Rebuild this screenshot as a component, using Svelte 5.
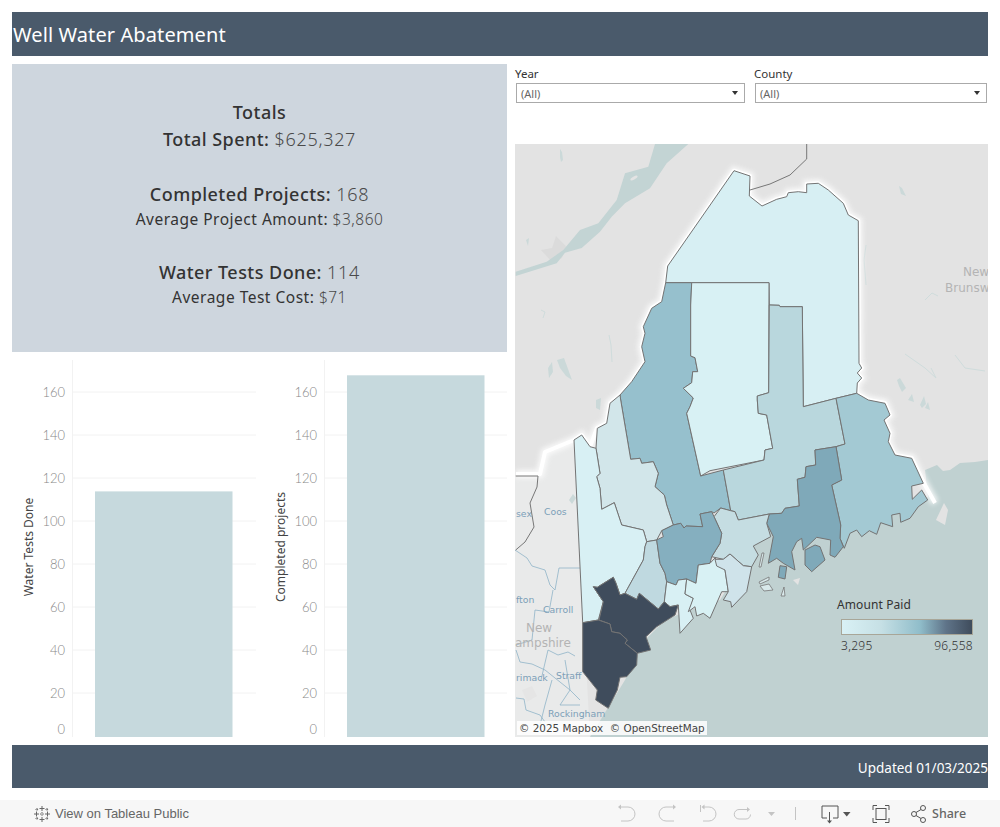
<script>
  const ticks = [160, 140, 120, 100, 80, 60, 40, 20]
  const y = (v) => 376.5 - v * 2.15

  const charts = [
    { label: 'Water Tests Done', value: 114, width: 244 },
    { label: 'Completed projects', value: 168, width: 243 },
  ]

  const filters = [
    { label: 'Year', width: 229 },
    { label: 'County', width: 232 },
  ]

  const counties = [
    { name: 'aroostook', fill: '#d7eff3', pts: '667.7,266 734,170.7 750,176 749.3,196 762,206 776.7,199.3 786.7,196.7 788.3,192.7 798.3,191.7 806.7,192.7 806.7,184 818.3,183.3 828.3,190 843.3,203.3 848.3,215 858.3,220.7 859,363.3 861.7,368 857.3,373 861.7,378 857.3,383 856.7,393.3 836,398.3 803.3,406.7 802.3,306.7 780,306.7 779.3,305.3 769.3,305 769,282.7 665.7,282.7' },
    { name: 'somerset', fill: '#96c0cd', pts: '665.7,282.7 691.7,282.7 690.7,305 690.7,356 695,357.7 697.7,371.7 692.7,371.7 691.7,382.7 683.3,388.3 693.3,398 690,406.7 686.7,413.3 700.7,476 723.3,470 730.7,510.7 720.7,508 714,513 711.7,511.7 700,514 702.7,526.7 686,526 684,528 680.7,523.3 673.3,525 666.7,505 664.3,495 655,486.7 658.3,473.3 653.3,461.7 641.7,463.3 640,458.3 630.7,459.3 620.7,400 620,395 631.7,381.7 645,361.7 641.7,346.7 645,333.3 643.3,326.7 651.7,308.3 661.7,301.7' },
    { name: 'piscataquis', fill: '#d8f1f4', pts: '691.7,282.7 769,282.7 768.7,392.7 757.3,396 757.3,400 758.3,413.3 766.7,415 772.7,448.3 765,450 764,460 710,470.7 700.7,476 686.7,413.3 690,406.7 693.3,398 683.3,388.3 691.7,382.7 692.7,371.7 697.7,371.7 695,357.7 690.7,356 690.7,305' },
    { name: 'penobscot', fill: '#b9d7dd', pts: '769.3,305 779.3,305.3 780,306.7 802.3,306.7 803.3,406.7 836,398.3 845,444 836,446.7 815,450 815.7,465 806,466.7 805,477.3 797.3,479.3 799.3,506 785,508.3 781.7,513.3 769.3,514 738.3,520 735,511.7 730.7,510.7 723.3,470 764,460 765,450 772.7,448.3 766.7,415 758.3,413.3 757.3,400 757.3,396 768.7,392.7' },
    { name: 'washington', fill: '#a3c9d3', pts: '836,398.3 856.7,393.3 868.3,400 885,403.3 890,415 884,420 890,433.3 888.3,441.7 895,455 911.7,458.3 923.3,483.3 911.7,486 912.3,499.3 921.7,490 927.7,500 918.3,506.7 910,518.3 900.7,522.3 900,513.3 891.7,515 892.7,526.7 880.7,522.7 876.7,534.3 869.3,530.7 861.7,536.7 856.7,530 850,533.3 844.3,548.3 840,538.3 840.7,525 831.7,485 841.7,480 836,446.7 845,444' },
    { name: 'hancock', fill: '#7fa9b9', pts: '815,450 836,446.7 841.7,480 831.7,485 840.7,525 840,538.3 843.3,546.7 835,557.3 830,555 830.7,540 816.7,537.3 803.3,550 801.7,538.3 796.7,541.7 791.7,551.7 795,570 783.3,563.3 776.7,558.3 768.3,563.3 773.3,536.7 766.7,523.3 769.3,514 781.7,513.3 785,508.3 799.3,506 797.3,479.3 805,477.3 806,466.7 815.7,465' },
    { name: 'mdi', fill: '#7fa9b9', pts: '805,550 815,545 820,546.7 825,560 811.7,571.7 805,565' },
    { name: 'isle', fill: '#7fa9b9', pts: '780,565.7 786.7,566.7 785,579 778.3,577.3' },
    { name: 'waldo', fill: '#c5dde2', pts: '720.7,508 730.7,510.7 735,511.7 738.3,520 769.3,514 766.7,523.3 770.7,536.7 753.3,546 758.3,555 751.7,566.7 743.3,565.7 730,554 723.3,559.3 711.7,556.7 720,543.3 721.7,533.3 714,516.7' },
    { name: 'franklin', fill: '#d2e6ea', pts: '620.7,400 630.7,459.3 640,458.3 641.7,463.3 653.3,461.7 658.3,473.3 655,486.7 664.3,495 666.7,505 673.3,525 661.7,530.7 656.7,540 646.7,541.7 643.3,530 621.7,525 614.3,502.7 601.7,509.3 600,488.3 596.7,476.7 600,473.3 596,448.3 597.3,428.3 606.7,423.3 610,403.3 620,395' },
    { name: 'oxford', fill: '#d8f0f4', pts: '574,440 581.7,435 590,446.7 596,448.3 600,473.3 596.7,476.7 600,488.3 601.7,509.3 614.3,502.7 621.7,525 643.3,530 646.7,541.7 645,546.7 643.3,560 625,593.3 620,595 616,583.3 613.3,577.3 597.3,587.3 593.3,586.7 603.3,601.7 598.3,620 582.7,622.7' },
    { name: 'androscoggin', fill: '#bfd9e0', pts: '646.7,541.7 656.7,540 660,563.3 665,573.3 666.7,581.7 664.3,601.7 658.3,609 639.3,593.3 636.7,599.3 625,593.3 643.3,560 645,546.7' },
    { name: 'kennebec', fill: '#85afbf', pts: '673.3,525 680.7,523.3 684,528 686,526 702.7,526.7 700,514 711.7,511.7 714,516.7 721.7,533.3 720,543.3 711.7,556.7 710,563.3 698.3,565 696,583.3 686.7,579 678.3,580 676,585 666.7,581.7 665,573.3 660,563.3 656.7,540 663.3,536.7 661.7,530.7' },
    { name: 'sagadahoc', fill: '#d8f0f4', pts: '666.7,581.7 676,585 678.3,580 686.7,579 685,594 693.3,598.3 690,610 693.3,618.3 680,633.3 678.3,605 670,606.7 664.3,601.7' },
    { name: 'lincoln', fill: '#d8f1f4', pts: '686.7,579 696,583.3 698.3,565 710,563.3 715,558 725,570 728.3,591.7 721.7,591.7 710,618.3 703.3,613.3 696.7,616 695,606.7 688.3,611.7 693.3,598.3 685,594' },
    { name: 'knox', fill: '#cfe3ea', pts: '715,559.3 723.3,559.3 730,554 743.3,565.7 751.7,566.7 746.7,591.7 731.7,607.3 730.7,601.7 723.3,600 728.3,591.7 725,570 716.7,566' },
    { name: 'cumberland', fill: '#3f4c5c', pts: '613.3,577.3 616,583.3 620,595 625,593.3 636.7,599.3 639.3,593.3 658.3,609 664.3,601.7 670,606.7 678.3,605 675,615 656.7,626.7 646,636.7 650.7,650 637.3,653.3 625,643.3 627.3,640 620,633.3 611.7,631.7 610,624 599,620 603.3,601.7 593.3,586.7 597.3,587.3' },
    { name: 'york', fill: '#3f4c5c', pts: '582.7,622.7 598.3,620 610,624 611.7,631.7 620,633.3 627.3,640 625,643.3 637.3,653.3 636.7,665 626.7,676.7 620,677.3 617.3,690 608.3,708.3 595.7,700 597.3,690 582.7,671.7' },
  ]

  const halo = '516,474 540,474 545,452 574,440 581.7,435 590,446.7 597,428 606.7,423 610,403 620,395 631.7,381.7 645,361.7 641.7,346.7 645,333 643,327 651.7,308 661.7,301.7 665.7,282.7 667.7,266 734,170.7 750,176 749.3,196 762,206 776.7,199.3 786.7,196.7 788.3,192.7 798.3,191.7 806.7,192.7 806.7,184 818.3,183.3 828.3,190 843.3,203.3 848.3,215 858.3,220.7 859,363 861.7,368 857.3,373 861.7,378 857.3,383 856.7,393.3 868.3,400 885,403 890,415 884,420 890,433 888,442 895,455 911.7,458 925,485 935,503'

  const seaPts = '988,460 975,462 960,463 950,470 943,471 937,465 925,470 928,497 905,510 850,528 800,535 768,520 745,560 720,600 690,610 665,620 645,640 625,680 590,737 988,737'

  const river = '515.7,271.7 546.7,261.7 563.3,250 580,230 598.3,223.3 616.7,200 625,173.3 648.3,166.7 655,144 688.3,144 666.7,163.3 650,188.3 625,203.3 611.7,216.7 600,231.7 581.7,248 565,252.7 556.7,263.3 515.7,276'

  const lakes = [
    '560,149 562,152 563,160 561,162 560,157',
    '526,240 529,238 528,246',
    '897,380 900,378 906,388 902,392 899,386',
    '920,405 924,396 926,404 922,408',
    '908,400 912,394 914,402',
    '548,368 552,362 553,372 549,378',
    '557,360 564,358 572,380 566,376 560,368',
    '925,408 928,402 930,410',
    '596,400 601,398 600,410 596,408',
    '899,186 902,188 906,196 901,194',
    '569,500 573,494 576,498 572,504',
  ]

  const streams = [
    '866,245 864,260 866,285',
    '905,354 925,368 936,378 931,368',
    '955,355 965,368 985,371',
    '609,335 611,345 612,362',
    '541,310 545,312 543,318',
    '925,300 932,293 938,296',
  ]

  const nhLines = [
    '515,550 527,558 532,566 545,570 550,585 555,590 559,568 580,568',
    '553,590 549,612 535,610 532,640 516,645',
    '516,650 520,662 532,664 545,670 570,690 580,700',
    '541,680 548,650 558,655 568,652 575,656',
    '565,660 570,690 560,705 580,705',
    '552,680 545,705 540,725',
    '516,698 524,699 526,710 540,715 545,722',
  ]

  const mapLabels = [
    { x: 516, y: 517, t: 'sex', cls: 'blue' },
    { x: 544, y: 515, t: 'Coos', cls: 'blue' },
    { x: 516, y: 603, t: 'fton', cls: 'blue' },
    { x: 543, y: 613, t: 'Carroll', cls: 'blue' },
    { x: 526, y: 632, t: 'New', cls: 'grey' },
    { x: 515, y: 647, t: 'ampshire', cls: 'grey' },
    { x: 516, y: 681, t: 'rimack', cls: 'blue' },
    { x: 556, y: 679, t: 'Straff', cls: 'blue' },
    { x: 548, y: 717, t: 'Rockingham', cls: 'blue' },
    { x: 963, y: 276, t: 'New', cls: 'grey' },
    { x: 945, y: 292, t: 'Brunsw', cls: 'grey' },
  ]
</script>

<div class="page">
  <header class="title">Well Water Abatement</header>

  <main class="middle">
    <section class="left">
      <div class="totals">
        <p class="big"><b>Totals</b></p>
        <p class="big"><b>Total Spent:</b> <span>$625,327</span></p>
        <p class="big gap"><b>Completed Projects:</b> <span>168</span></p>
        <p class="small">Average Project Amount: <span>$3,860</span></p>
        <p class="big gap"><b>Water Tests Done:</b> <span>114</span></p>
        <p class="small">Average Test Cost: <span>$71</span></p>
      </div>

      <div class="charts">
        {#each charts as c}
          <svg class="chart" width={c.width} height="377" viewBox="0 0 {c.width} 377">
            <line class="grid" x1="60.5" y1="0" x2="60.5" y2="377" />
            {#each ticks as t}
              <line class="grid" x1="60" y1={y(t) - 0.5} x2={c.width} y2={y(t) - 0.5} />
              <text class="tick" x="53" y={y(t) + 4.5}>{t}</text>
            {/each}
            <text class="tick" x="53" y="373.500">0</text>
            <rect class="bar" x="83" y={y(c.value)} width="137.5" height={377 - y(c.value)} />
            <text class="axis" transform="translate(21 187) rotate(-90)">{c.label}</text>
          </svg>
        {/each}
      </div>
    </section>

    <section class="right">
      <div class="filters">
        {#each filters as f}
          <div class="filter" style="width:{f.width}px">
            <div class="filter-label">{f.label}</div>
            <div class="select">
              <span>(All)</span>
              <i class="caret"></i>
            </div>
          </div>
        {/each}
      </div>

      <div class="map">
        <svg width="473" height="593" viewBox="515 144 473 593">
          <defs>
            <filter id="soft" x="-10%" y="-10%" width="120%" height="120%">
              <feGaussianBlur stdDeviation="2.5" />
            </filter>
          </defs>
          <rect x="515" y="144" width="473" height="593" fill="#e3e3e3" />
          <polygon points="515,476 540,476 545,452 574,440 590,737 515,737" fill="#e9eaea" />
          <polygon points="552,248 556,236 566,246 562,258 552,262 541,250" fill="#dbdbdb" />
          <polygon points="522,690 532,686 537,696 527,702" fill="#e5e5e5" />

          <polygon points={seaPts} fill="#c0d1d1" />
          <polygon points="936,520 944,503 948,510 945,525" fill="#e3e3e3" />
          <polygon points="793,580 800,578 798,585" fill="#e3e3e3" />

          <polygon points={river} fill="#c3d4d4" />
          <ellipse cx="634" cy="178" rx="4" ry="1.500" fill="#e3e3e3" transform="rotate(-30 634 178)" />
          {#each lakes as l}
            <polygon points={l} fill="#cbd9d9" />
          {/each}
          {#each streams as s}
            <polyline points={s} class="stream" />
          {/each}
          {#each nhLines as s}
            <polyline points={s} class="county-line" />
          {/each}

          <polyline points={halo} class="halo-blur" filter="url(#soft)" />
          <polyline points={halo} class="halo" />

          <polyline points="806.7,144 806.7,159 790,175 770,184 750,190" class="border" />
          <polyline points="515.7,476 538,476 537,487 530,503 534,527 525,542 515.7,550" class="border" />

          {#each counties as c}
            <polygon points={c.pts} fill={c.fill} class="county" />
          {/each}

          <polygon points="762,553 764,553 761,567 759,567" class="islet" />
          <polygon points="759,582 769,577 769,580 760,584" class="islet" />
          <polygon points="760,586 769,584 773,590 764,591" class="islet" />
          <polygon points="784,587 785,596 781,596" class="islet" />

          {#each mapLabels as m}
            <text x={m.x} y={m.y} class="map-label {m.cls}">{m.t}</text>
          {/each}
        </svg>

        <div class="attribution">© 2025 Mapbox&nbsp; © OpenStreetMap</div>

        <div class="legend">
          <div class="legend-title">Amount Paid</div>
          <div class="legend-bar"></div>
          <div class="legend-values"><span>3,295</span><span>96,558</span></div>
        </div>
      </div>
    </section>
  </main>

  <footer class="updated">Updated 01/03/2025</footer>
</div>

<div class="toolbar">
  <div class="view">
    <svg width="18" height="18" viewBox="0 0 18 18" class="logo">
      <g stroke="#666" stroke-width="1" fill="none">
        <path d="M9 1v5M6.5 3.5h5M9 12v5M6.5 14.500h5M1 9h5M3.500 6.500v5M12 9h5M14.500 6.500v5" />
        <path d="M9 7v4M7 9h4M4 3v3M2.500 4.500h3M14 3v3M12.500 4.500h3M4 12v3M2.500 13.500h3M14 12v3M12.500 13.500h3" stroke-dasharray="1 0.6" />
      </g>
    </svg>
    <span>View on Tableau Public</span>
  </div>

  <div class="actions">
    <svg width="354" height="27" viewBox="0 0 354 27">
      <g class="off">
        <path d="M3 7h8a6.500 6.500 0 0 1 0 14H4" />
        <path class="solid" d="M1 7l3-2.500v5z" />
        <path d="M57 7h-8a6.500 6.500 0 0 0 0 14h8" />
        <path class="solid" d="M59 7l-3-2.500v5z" />
        <path d="M83.500 5v7" />
        <path d="M86 7h6a6.500 6.500 0 0 1 0 14h-6" />
        <path class="solid" d="M84.500 7l3-2.500v5z" />
        <path d="M130 9.500h-8a4.500 4.500 0 0 0 0 9.500h7a4.500 4.500 0 0 0 4.500-4.500" />
        <path class="solid" d="M133 9.500l-3-2.500v5z" />
        <path class="solid" d="M151 12h7l-3.500 4z" />
        <path d="M178.500 7v13" />
      </g>
      <g class="on">
        <path d="M210 18h-5v-12h16v12h-5" />
        <path d="M212.500 12v10" />
        <path class="solid" d="M210 20.500h5l-2.500 3z" />
        <path class="solid" d="M226 12h7.500l-3.750 4.500z" />
        <path d="M256 10V5.500h4M268 5.500h4V10M256 18v4.500h4M268 22.500h4V18" />
        <rect x="259" y="8.500" width="10" height="11" />
        <circle cx="297" cy="14" r="2.500" />
        <circle cx="306" cy="8" r="2.500" />
        <circle cx="306" cy="20" r="2.500" />
        <path d="M299 12.500l5-3M299 15.500l5 3" />
      </g>
      <text x="315" y="18" class="share">Share</text>
    </svg>
  </div>
</div>

<style>
  :global(body) {
    margin: 0;
    background: #fff;
  }
  .page {
    width: 976px;
    padding: 12px 12px 0;
    display: flex;
    flex-direction: column;
    font-family: 'Noto Sans', sans-serif;
    color: #333;
  }
  .title {
    height: 44px;
    line-height: 46px;
    padding-left: 1px;
    background: #4a5a6b;
    color: #fff;
    font-size: 20px;
    letter-spacing: 0.1px;
  }
  .middle {
    display: grid;
    grid-template-columns: 495px 473px;
    gap: 8px;
    margin-top: 8px;
    height: 673px;
  }
  .left {
    display: flex;
    flex-direction: column;
    gap: 8px;
  }
  .totals {
    height: 288px;
    box-sizing: border-box;
    padding-top: 35px;
    background: #ced6de;
    text-align: center;
  }
  .totals p {
    margin: 0;
    color: #333;
  }
  .totals span {
    font-weight: 300;
    color: #4a4a4a;
  }
  .big {
    font-size: 18px;
    line-height: 27px;
    letter-spacing: 0.45px;
  }
  .big b {
    font-weight: 500;
  }
  .big span {
    letter-spacing: 0.7px;
  }
  .small {
    font-size: 15.5px;
    line-height: 23px;
    letter-spacing: 0.5px;
  }
  .gap {
    margin-top: 28px !important;
  }
  .charts {
    display: flex;
    height: 377px;
    gap: 8px;
  }
  .chart {
    display: block;
  }
  .grid {
    stroke: #f2f2f2;
    stroke-width: 1;
  }
  .tick {
    font-family: Lato, sans-serif;
    font-size: 13px;
    font-weight: 300;
    fill: #888;
    text-anchor: end;
  }
  .bar {
    fill: #c6d9dd;
  }
  .axis {
    font-family: 'Noto Sans', sans-serif;
    font-size: 12px;
    fill: #444;
    text-anchor: middle;
  }
  .right {
    display: flex;
    flex-direction: column;
  }
  .filters {
    height: 80px;
    display: flex;
    gap: 10px;
    padding-left: 1px;
  }
  .filter-label {
    font-size: 11.5px;
    line-height: 19px;
    margin-left: -1px;
    color: #333;
  }
  .select {
    height: 18px;
    border: 1px solid #aaa;
    display: flex;
    align-items: center;
    justify-content: space-between;
    padding: 0 6px 0 4px;
    font-size: 11px;
    color: #666;
  }
  .caret {
    width: 0;
    height: 0;
    border: 3.5px solid transparent;
    border-top: 4.5px solid #333;
    border-bottom: 0;
  }
  .map {
    position: relative;
    height: 593px;
    overflow: hidden;
  }
  .map svg {
    display: block;
  }
  .stream {
    fill: none;
    stroke: #cfdcdc;
    stroke-width: 1;
  }
  .county-line {
    fill: none;
    stroke: #8fb4c8;
    stroke-width: 0.8;
  }
  .halo {
    fill: none;
    stroke: #fff;
    stroke-width: 4;
    stroke-linejoin: round;
  }
  .halo-blur {
    fill: none;
    stroke: #fff;
    stroke-width: 8;
    opacity: 0.8;
  }
  .border {
    fill: none;
    stroke: #777;
    stroke-width: 1;
  }
  .county {
    stroke: #737373;
    stroke-width: 1;
    stroke-linejoin: round;
  }
  .islet {
    fill: #d8e8ea;
    stroke: #777;
    stroke-width: 0.8;
  }
  .map-label {
    font-family: 'DejaVu Sans', sans-serif;
    font-size: 9.3px;
  }
  .map-label.blue {
    fill: #7c9fb8;
  }
  .map-label.grey {
    font-size: 12px;
    fill: #b4b4b4;
  }
  .attribution {
    position: absolute;
    left: 2px;
    bottom: 2px;
    padding: 0 2px;
    height: 14px;
    line-height: 14px;
    background: rgba(255, 255, 255, 0.85);
    font-family: 'DejaVu Sans', sans-serif;
    font-size: 10.4px;
    color: #444;
    white-space: nowrap;
  }
  .legend {
    position: absolute;
    left: 322px;
    top: 453px;
    width: 136px;
    font-size: 12px;
    color: #333;
  }
  .legend-title {
    line-height: 16px;
    margin-bottom: 6px;
    letter-spacing: 0.1px;
  }
  .legend-bar {
    margin-left: 4px;
    height: 14px;
    border: 1px solid #a8a698;
    background: linear-gradient(90deg, #d9f1f5 0%, #c6e0e5 30%, #90bdca 60%, #5f7489 80%, #3f4c5c 100%);
  }
  .legend-values {
    margin: 2px 0 0 4px;
    display: flex;
    justify-content: space-between;
    line-height: 17px;
    font-size: 12px;
    font-weight: 300;
    letter-spacing: 0.3px;
  }
  .updated {
    height: 43px;
    line-height: 47px;
    margin-top: 8px;
    background: #4a5a6b;
    color: #fff;
    text-align: right;
    font-size: 13.5px;
  }
  .toolbar {
    margin-top: 12px;
    height: 27px;
    background: #f7f7f7;
    display: flex;
    justify-content: space-between;
    font-family: 'Liberation Sans', sans-serif;
    font-size: 13px;
    color: #666;
  }
  .view {
    display: flex;
    align-items: center;
    gap: 4px;
    padding-left: 33px;
  }
  .actions {
    padding-right: 29px;
  }
  .actions svg {
    display: block;
  }
  .off path, .on path, .on rect, .on circle {
    fill: none;
    stroke-width: 1;
  }
  .off path {
    stroke: #c4c4c4;
  }
  .on path, .on rect, .on circle {
    stroke: #555;
  }
  .off path.solid {
    fill: #c4c4c4;
    stroke: none;
  }
  .on path.solid {
    fill: #555;
    stroke: none;
  }
  .share {
    font-family: 'Noto Sans', sans-serif;
    font-size: 12.5px;
    font-weight: 500;
    fill: #666;
  }
</style>
